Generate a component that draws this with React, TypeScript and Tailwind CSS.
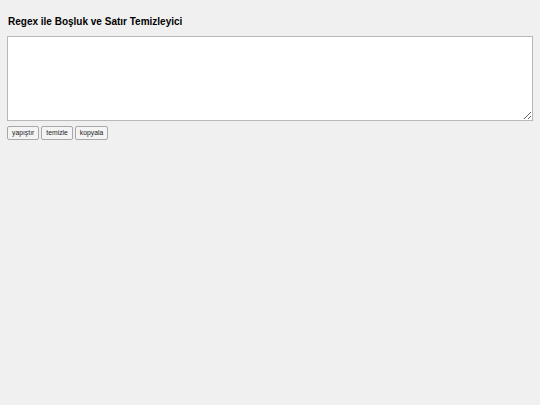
export default function App() {
  return (
    <div className="min-h-screen bg-[#f0f0f0] px-[7px] pt-[15px] font-['Liberation_Sans',Arial,sans-serif] text-black">
      <h1 className="pl-px text-[10px] font-bold leading-[13px]">Regex ile Boşluk ve Satır Temizleyici</h1>
      <textarea className="mt-[8px] block h-[85px] w-[526px] resize-y border border-[#b8b8b8] bg-white" />
      <div className="mt-[5px] flex gap-[2px]">
        {['yapıştır', 'temizle', 'kopyala'].map((label) => (
          <button
            key={label}
            className="h-[14px] rounded-[2px] border border-[#a8a8a8] bg-[#f4f4f4] px-[4px] text-[6.8px] leading-none text-[#222]"
          >
            {label}
          </button>
        ))}
      </div>
    </div>
  )
}
